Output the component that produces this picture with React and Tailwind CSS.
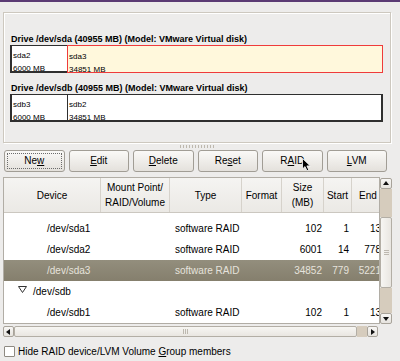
import React from "react";

const rows = [
  { dev: "/dev/sda1", pl: "pl-[43px]", type: "software RAID", size: "102", start: "1", end: "13" },
  { dev: "/dev/sda2", pl: "pl-[43px]", type: "software RAID", size: "6001", start: "14", end: "778" },
  { dev: "/dev/sda3", pl: "pl-[43px]", type: "software RAID", size: "34852", start: "779", end: "5221", sel: true },
  { dev: "/dev/sdb", pl: "pl-[29px]", exp: true },
  { dev: "/dev/sdb1", pl: "pl-[43px]", type: "software RAID", size: "102", start: "1", end: "13" },
];

function Btn({ children, focus }) {
  return (
    <div className="relative h-[22px] rounded-[3px] border border-[#a19d95] bg-gradient-to-b from-[#faf9f7] to-[#e4e1dc] flex items-center justify-center leading-none">
      {focus && <div className="absolute inset-[2px] border border-dotted border-[#6b6b6b]" />}
      <span>{children}</span>
    </div>
  );
}

function DriveBar({ a, b, sel }) {
  return (
    <div className="flex h-[28px] w-[373px] bg-white">
      <div className="w-[57px] border-l-2 border-t border-b-2 border-[#2f2f2f] pl-[1px] pt-[3px] text-[8px] leading-[13px]">
        <div>{a[0]}</div>
        <div>{a[1]}</div>
      </div>
      {sel ? (
        <div className="flex-1 border border-[#ef3b3b] bg-[#fff8dc] pl-[1px] pt-[4px] text-[8px] leading-[13px]">
          <div>{b[0]}</div>
          <div>{b[1]}</div>
        </div>
      ) : (
        <div className="flex-1 border-l border-t border-b-2 border-r-2 border-[#2f2f2f] pl-[1px] pt-[3px] text-[8px] leading-[13px]">
          <div>{b[0]}</div>
          <div>{b[1]}</div>
        </div>
      )}
    </div>
  );
}

function Arrow({ dir }) {
  const pts = {
    up: "1,5 4,1 7,5",
    down: "1,2 4,6 7,2",
    left: "5,1 1,4 5,7",
    right: "2,1 6,4 2,7",
  }[dir];
  return (
    <svg width="8" height="8" viewBox="0 0 8 8">
      <polygon points={pts} fill="#111" />
    </svg>
  );
}

function ArrowBox({ dir, cls = "" }) {
  return (
    <div className={`flex items-center justify-center rounded-[2px] border border-[#a8a39a] bg-gradient-to-b from-[#f8f7f5] to-[#e6e3de] ${cls}`}>
      <Arrow dir={dir} />
    </div>
  );
}

export default function App() {
  return (
    <div className="relative w-[400px] h-[361px] overflow-hidden bg-[#edeceb] text-[10px] text-black font-['Liberation_Sans',Arial,sans-serif]">
      <div className="h-[2px] bg-[#5b3b74]" />

      {/* disk frame */}
      <div className="pt-[10px] pl-[3px]">
        <div className="w-[388px] h-[131px] border border-[#cdc8bf] shadow-[inset_1px_1px_0_#ffffff,1px_1px_0_#ffffff] pl-[6px] pt-[21px]">
          <div className="font-bold text-[9px] leading-[11px] pl-[1px]">
            Drive /dev/sda (40955 MB) (Model: VMware Virtual disk)
          </div>
          <DriveBar a={["sda2", "6000 MB"]} b={["sda3", "34851 MB"]} sel />
          <div className="mt-[10px] font-bold text-[9px] leading-[11px] pl-[1px]">
            Drive /dev/sdb (40955 MB) (Model: VMware Virtual disk)
          </div>
          <DriveBar a={["sdb3", "6000 MB"]} b={["sdb2", "34851 MB"]} />
        </div>
      </div>

      {/* pane handle */}
      <div className="h-[7px] flex justify-center">
        <div className="mt-[2px] ml-[-6px] flex gap-[2px] h-[3px]">
          {Array.from({ length: 12 }).map((_, i) => (
            <div key={i} className="w-[1px] h-[3px] bg-[#bdb8ae]" />
          ))}
        </div>
      </div>

      {/* buttons */}
      <div className="ml-[4px] w-[383px] grid grid-cols-6 gap-[4px]">
        <Btn focus>Ne<u className="underline-offset-1">w</u></Btn>
        <Btn><u className="underline-offset-1">E</u>dit</Btn>
        <Btn><u className="underline-offset-1">D</u>elete</Btn>
        <Btn>Re<u className="underline-offset-1">s</u>et</Btn>
        <Btn>R<u className="underline-offset-1">A</u>ID</Btn>
        <Btn><u className="underline-offset-1">L</u>VM</Btn>
      </div>

      {/* table */}
      <div className="ml-[3px] mt-[5px] w-[389px]">
        <div className="flex h-[147px]">
          <div className="w-[377px] border border-[#b1ada5] bg-white overflow-hidden">
            <div className="w-[380px]">
              <div className="grid grid-cols-[97px_69px_72px_40px_42px_28px_32px] h-[35px] border-b border-[#cbc7c0] bg-gradient-to-b from-[#f5f4f2] to-[#ebe9e5] leading-[15px]">
                <div className="flex items-center justify-center border-r border-[#d6d2cb]">Device</div>
                <div className="flex flex-col items-center justify-center border-r border-[#d6d2cb] text-center">
                  <div>Mount Point/</div>
                  <div>RAID/Volume</div>
                </div>
                <div className="flex items-center justify-center border-r border-[#d6d2cb]">Type</div>
                <div className="flex items-center justify-center border-r border-[#d6d2cb]">Format</div>
                <div className="flex flex-col items-center justify-center border-r border-[#d6d2cb] text-center">
                  <div>Size</div>
                  <div>(MB)</div>
                </div>
                <div className="flex items-center justify-center border-r border-[#d6d2cb]">Start</div>
                <div className="flex items-center justify-center">End</div>
              </div>
              <div className="h-[5px]" />
              {rows.map((r, i) => (
                <div
                  key={i}
                  className={`grid grid-cols-[97px_69px_72px_40px_42px_28px_32px] h-[21px] items-center ${
                    r.sel ? "bg-gradient-to-b from-[#938e7d] to-[#857f6d] text-[#e6e3dc]" : ""
                  }`}
                >
                  <div className={`${r.pl} relative whitespace-nowrap`}>
                    {r.exp && (
                      <svg className="absolute left-[14px] top-[2px]" width="9" height="8" viewBox="0 0 9 8">
                        <polygon points="0.5,0.5 8.5,0.5 4.5,6.5" fill="none" stroke="#333" strokeWidth="1" />
                      </svg>
                    )}
                    {r.dev}
                  </div>
                  <div />
                  <div className="pl-[5px] whitespace-nowrap">{r.type || ""}</div>
                  <div />
                  <div className="text-right pr-[2px]">{r.size || ""}</div>
                  <div className="text-right pr-[3px]">{r.start || ""}</div>
                  <div className="text-right pr-[3px]">{r.end || ""}</div>
                </div>
              ))}
            </div>
          </div>
          {/* vertical scrollbar */}
          <div className="w-[12px] flex flex-col">
            <ArrowBox dir="up" cls="h-[11px] mt-[1px]" />
            <div className="h-[28px] bg-[#d6ccbd]" />
            <div className="h-[71px] rounded-[2px] border border-[#b3aea5] bg-gradient-to-r from-[#f7f6f3] to-[#e9e6e1] flex flex-col items-center justify-center gap-[1px]">
              <div className="w-[5px] h-[1px] bg-[#bdb8af]" />
              <div className="w-[5px] h-[1px] bg-[#bdb8af]" />
              <div className="w-[5px] h-[1px] bg-[#bdb8af]" />
            </div>
            <div className="h-[25px] bg-[#d6ccbd]" />
            <ArrowBox dir="down" cls="h-[11px]" />
          </div>
        </div>
        {/* horizontal scrollbar */}
        <div className="flex h-[11px] mt-[2px] w-[375px]">
          <ArrowBox dir="left" cls="w-[11px]" />
          <div className="w-[343px] rounded-[2px] border border-[#b3aea5] bg-gradient-to-b from-[#f7f6f3] to-[#e9e6e1] flex items-center justify-center gap-[1px]">
            <div className="w-[1px] h-[5px] bg-[#bdb8af]" />
            <div className="w-[1px] h-[5px] bg-[#bdb8af]" />
            <div className="w-[1px] h-[5px] bg-[#bdb8af]" />
          </div>
          <div className="w-[10px] bg-[#d6ccbd]" />
          <ArrowBox dir="right" cls="w-[11px]" />
        </div>
      </div>

      {/* checkbox */}
      <div className="mt-[9px] ml-[4px] flex items-center gap-[3px]">
        <div className="w-[11px] h-[11px] border border-[#8e8a82] rounded-[1px] bg-white" />
        <span className="leading-[11px]">
          Hide RAID device/LVM Volume <u className="underline-offset-1">G</u>roup members
        </span>
      </div>

      {/* mouse cursor */}
      <svg className="absolute left-[302px] top-[158px]" width="10" height="14" viewBox="0 0 10 14">
        <path d="M0.5,0.5 L0.5,11 L3,8.6 L5,12.8 L6.8,12 L4.9,7.9 L8.3,7.9 Z" fill="#000" stroke="#fff" strokeWidth="0.8" />
      </svg>
    </div>
  );
}
